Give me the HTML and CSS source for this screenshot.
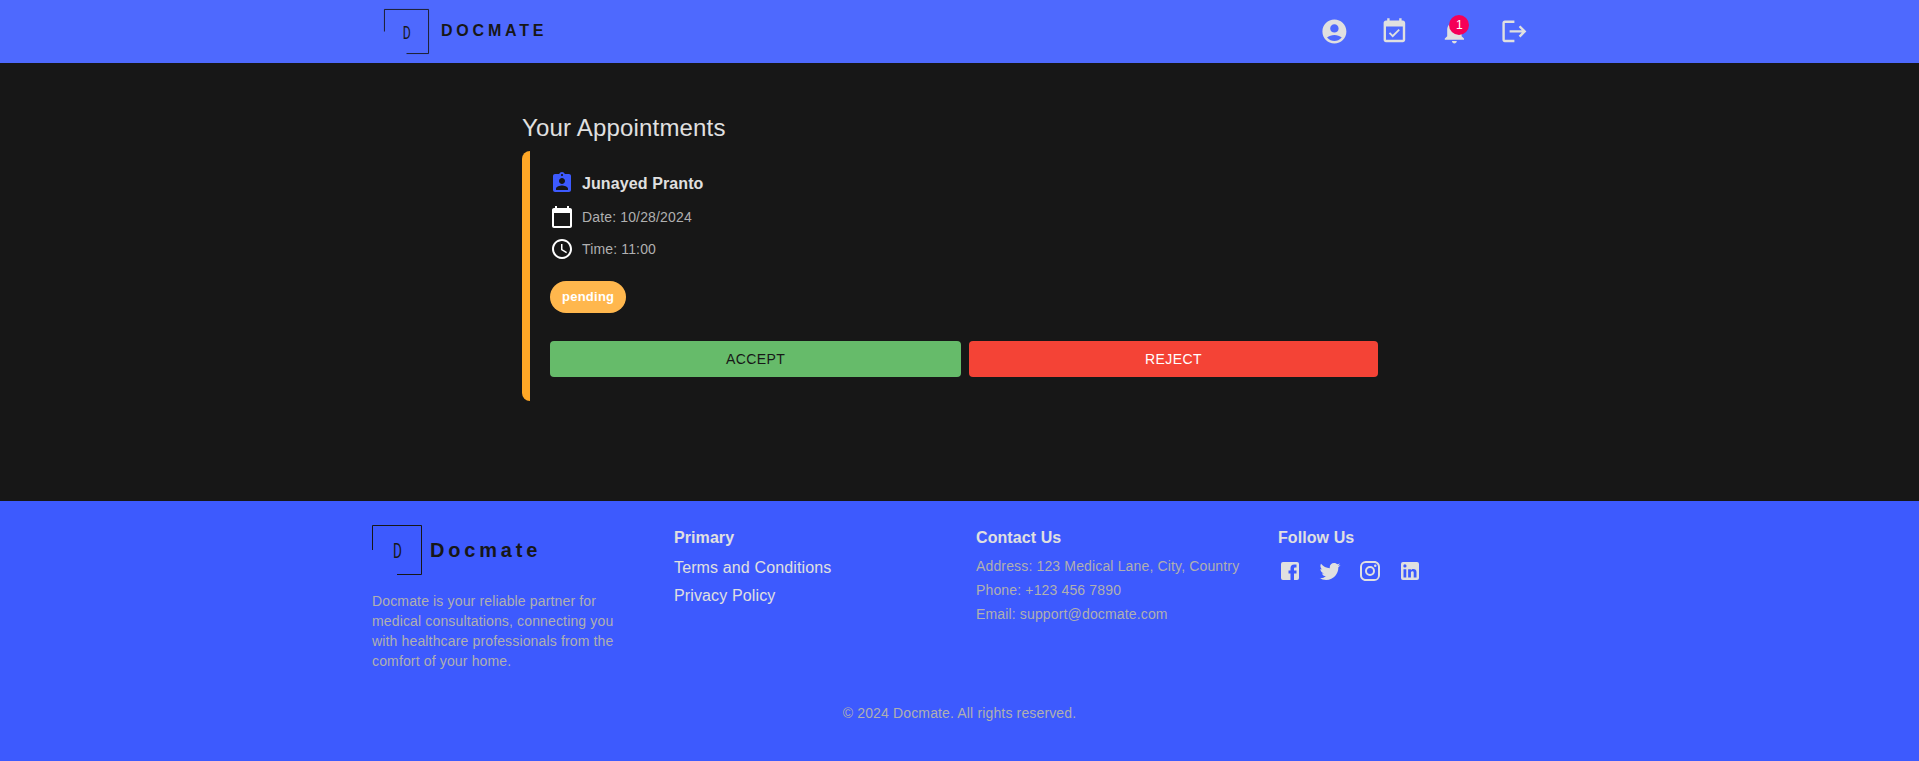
FILE: index.html
```html
<!DOCTYPE html>
<html lang="en">
<head>
<meta charset="utf-8">
<title>Docmate</title>
<link rel="stylesheet" href="styles.css">
</head>
<body>
<header class="header">
  <div class="header-inner">
    <a class="brand">
      <svg class="brand-mark" viewBox="0 0 50 50"><path d="M.5 25V.5h49v49H25"/><text class="mark-letter" transform="translate(20.900 33) scale(.68 1)">D</text></svg>
      <span class="brand-name">DOCMATE</span>
    </a>
    <nav class="nav">
      <svg viewBox="0 0 24 24"><path d="M12 2C6.48 2 2 6.48 2 12s4.48 10 10 10 10-4.48 10-10S17.52 2 12 2m0 4c1.93 0 3.5 1.57 3.5 3.5S13.93 13 12 13s-3.5-1.57-3.5-3.5S10.07 6 12 6m0 14c-2.03 0-4.43-.82-6.14-2.88C7.55 15.8 9.68 15 12 15s4.45.8 6.14 2.12C16.43 19.18 14.03 20 12 20"/></svg>
      <svg viewBox="0 0 24 24"><path d="M16.53 11.06 15.47 10l-4.88 4.88-2.12-2.12-1.06 1.06L10.59 17zM19 3h-1V1h-2v2H8V1H6v2H5c-1.11 0-1.99.9-1.99 2L3 19c0 1.1.89 2 2 2h14c1.1 0 2-.9 2-2V5c0-1.1-.9-2-2-2m0 16H5V8h14z"/></svg>
      <span class="alerts">
        <svg viewBox="0 0 24 24"><path d="M12 22c1.1 0 2-.9 2-2h-4c0 1.1.89 2 2 2m6-6v-5c0-3.07-1.64-5.64-4.5-6.32V4c0-.83-.67-1.5-1.5-1.5s-1.5.67-1.5 1.5v.68C7.63 5.36 6 7.92 6 11v5l-2 2v1h16v-1z"/></svg>
        <span class="badge">1</span>
      </span>
      <svg viewBox="0 0 24 24"><path d="m17 7-1.41 1.41L18.17 11H8v2h10.17l-2.58 2.58L17 17l5-5zM4 5h8V3H4c-1.1 0-2 .9-2 2v14c0 1.1.9 2 2 2h8v-2H4z"/></svg>
    </nav>
  </div>
</header>
<main class="main">
  <h1 class="title">Your Appointments</h1>
  <article class="card">
    <div class="row row-name">
      <svg class="blue" viewBox="0 0 24 24"><path d="M19 3h-4.18C14.4 1.84 13.3 1 12 1s-2.4.84-2.82 2H5c-1.1 0-2 .9-2 2v14c0 1.1.9 2 2 2h14c1.1 0 2-.9 2-2V5c0-1.1-.9-2-2-2m-7 0c.55 0 1 .45 1 1s-.45 1-1 1-1-.45-1-1 .45-1 1-1m0 4c1.66 0 3 1.34 3 3s-1.34 3-3 3-3-1.34-3-3 1.34-3 3-3m6 12H6v-1.4c0-2 4-3.1 6-3.1s6 1.1 6 3.1z"/></svg>
      <span class="name">Junayed Pranto</span>
    </div>
    <div class="row row-date">
      <svg viewBox="0 0 24 24"><path d="M20 3h-1V1h-2v2H7V1H5v2H4c-1.1 0-2 .9-2 2v16c0 1.1.9 2 2 2h16c1.1 0 2-.9 2-2V5c0-1.1-.9-2-2-2m0 18H4V8h16z"/></svg>
      <span>Date: 10/28/2024</span>
    </div>
    <div class="row">
      <svg viewBox="0 0 24 24"><path d="M11.99 2C6.47 2 2 6.48 2 12s4.47 10 9.99 10C17.52 22 22 17.52 22 12S17.52 2 11.99 2M12 20c-4.42 0-8-3.58-8-8s3.58-8 8-8 8 3.58 8 8-3.58 8-8 8m.5-13H11v6l5.25 3.15.75-1.23-4.5-2.67z"/></svg>
      <span>Time: 11:00</span>
    </div>
    <span class="chip">pending</span>
    <div class="actions">
      <button class="btn accept">ACCEPT</button>
      <button class="btn reject">REJECT</button>
    </div>
  </article>
</main>
<footer class="footer">
  <div class="columns">
    <section class="about">
      <div class="brand footer-brand">
        <svg class="brand-mark" viewBox="0 0 50 50"><path d="M.5 25V.5h49v49H25"/><text class="mark-letter" transform="translate(20.900 33) scale(.68 1)">D</text></svg>
        <span class="brand-name">Docmate</span>
      </div>
      <p class="blurb">Docmate is your reliable partner for medical consultations, connecting you with healthcare professionals from the comfort of your home.</p>
    </section>
    <section>
      <h2 class="heading">Primary</h2>
      <a class="link">Terms and Conditions</a>
      <a class="link">Privacy Policy</a>
    </section>
    <section>
      <h2 class="heading">Contact Us</h2>
      <p class="contact">Address: 123 Medical Lane, City, Country</p>
      <p class="contact">Phone: +123 456 7890</p>
      <p class="contact">Email: support@docmate.com</p>
    </section>
    <section>
      <h2 class="heading">Follow Us</h2>
      <div class="social">
        <svg viewBox="0 0 24 24"><path d="M5 3h14a2 2 0 0 1 2 2v14a2 2 0 0 1-2 2h-3v-6.500h2.500V11.500H16V9.800c0-.8.4-1.300 1.300-1.300h1.200V5.500h-2.300C13.800 5.500 12.500 7 12.500 9.400v2.100h-2v3h2V21H5a2 2 0 0 1-2-2V5a2 2 0 0 1 2-2"/></svg>
        <svg viewBox="0 0 24 24"><path d="M22.460 6c-.770.350-1.600.580-2.460.690.880-.530 1.560-1.370 1.880-2.380-.830.500-1.750.850-2.720 1.050C18.370 4.500 17.260 4 16 4c-2.350 0-4.270 1.920-4.270 4.290 0 .340.040.670.110.980C8.280 9.090 5.110 7.380 3 4.790c-.370.630-.580 1.370-.580 2.150 0 1.490.750 2.810 1.910 3.560-.710 0-1.370-.200-1.950-.500v.030c0 2.080 1.480 3.820 3.440 4.210a4.220 4.220 0 0 1-1.930.070 4.280 4.280 0 0 0 4 2.980 8.521 8.521 0 0 1-5.330 1.840q-.510 0-1.020-.060C3.440 20.290 5.700 21 8.120 21 16 21 20.330 14.460 20.330 8.790c0-.190 0-.370-.010-.560.840-.600 1.560-1.360 2.140-2.230"/></svg>
        <svg viewBox="0 0 24 24"><path d="M7.800 2h8.400C19.400 2 22 4.600 22 7.800v8.400a5.800 5.800 0 0 1-5.800 5.800H7.800C4.600 22 2 19.400 2 16.200V7.800A5.800 5.800 0 0 1 7.800 2m-.2 2A3.600 3.600 0 0 0 4 7.600v8.800C4 18.390 5.610 20 7.600 20h8.800a3.600 3.600 0 0 0 3.600-3.600V7.600C20 5.610 18.390 4 16.400 4zm9.650 1.500a1.250 1.250 0 1 1 0 2.500 1.250 1.250 0 0 1 0-2.500M12 7a5 5 0 1 1 0 10 5 5 0 0 1 0-10m0 2a3 3 0 1 0 0 6 3 3 0 0 0 0-6"/></svg>
        <svg viewBox="0 0 24 24"><path d="M19 3a2 2 0 0 1 2 2v14a2 2 0 0 1-2 2H5a2 2 0 0 1-2-2V5a2 2 0 0 1 2-2zm-.5 15.500v-5.300a3.260 3.260 0 0 0-3.260-3.260c-.850 0-1.840.520-2.320 1.300v-1.110h-2.790v8.370h2.790v-4.930c0-.770.620-1.400 1.390-1.400a1.400 1.400 0 0 1 1.400 1.400v4.930zM6.880 8.560a1.680 1.680 0 0 0 0-3.370 1.690 1.690 0 0 0 0 3.370m1.390 9.940v-8.370H5.500v8.370z"/></svg>
      </div>
    </section>
  </div>
  <p class="copyright">© 2024 Docmate. All rights reserved.</p>
</footer>
</body>
</html>
```
FILE: styles.css
```css
* { box-sizing: border-box; }
body {
  margin: 0;
  height: 761px;
  display: flex;
  flex-direction: column;
  overflow: hidden;
  background: #171717;
  color: #e0e0e0;
  font-family: "Liberation Sans", Arial, sans-serif;
}
h1, h2, p { margin: 0; }
svg { flex: none; fill: currentColor; }

.header { height: 63px; background: #4e69fe; }
.header-inner {
  width: 1151px;
  height: 63px;
  margin: 0 auto;
  display: flex;
  align-items: center;
  justify-content: space-between;
  padding-right: 6.6px;
}
.brand { display: flex; align-items: center; gap: 12px; color: #171717; }
.brand-mark { width: 45px; height: 45px; overflow: visible; }
.brand-mark path { fill: none; stroke: #171717; stroke-width: 1; }
.mark-letter { font: 400 20px Roboto, sans-serif; }
.brand-name { font-size: 16px; font-weight: 700; letter-spacing: 3.8px; line-height: 24px; margin-top: -2px; }
.nav { display: flex; align-items: center; gap: 31.2px; }
.nav svg { display: block; width: 28.8px; height: 28.8px; }
.alerts { position: relative; }
.badge {
  position: absolute;
  top: -2px;
  right: -1px;
  width: 20px;
  height: 20px;
  border-radius: 10px;
  background: #f50057;
  color: #fff;
  font-size: 12px;
  line-height: 20px;
  text-align: center;
}

.main { height: 438px; width: 875px; margin: 0 auto; padding-top: 49px; }
.title { font-size: 24px; font-weight: 400; line-height: 32px; letter-spacing: .18px; margin-bottom: 7px; }
.card {
  height: 250px;
  padding: 20px 19px 24px 20px;
  border-left: 8px solid #ffa726;
  border-radius: 8px;
}
.row {
  display: flex;
  align-items: center;
  gap: 8px;
  height: 24px;
  color: #b0b0b0;
  font-size: 14px;
  letter-spacing: .15px;
}
.row svg { width: 24px; height: 24px; color: #fff; }
.row .blue { color: #3d5afe; }
.row-name { margin-bottom: 10px; }
.row-date { margin-bottom: 8px; }
.name { color: #e0e0e0; font-size: 16px; font-weight: 700; margin-top: 1px; letter-spacing: .1px; }
.chip {
  display: inline-block;
  height: 32px;
  margin-top: 20px;
  padding: 0 12px;
  border-radius: 16px;
  background: #ffb74d;
  color: #fff;
  font-size: 13px;
  font-weight: 700;
  line-height: 32px;
  letter-spacing: .25px;
}
.actions { display: grid; grid-template-columns: 411px 409px; gap: 8px; margin-top: 28px; }
.btn {
  height: 36px;
  padding: 0;
  border: 0;
  border-radius: 4px;
  font: 14px/36px "Liberation Sans", Arial, sans-serif;
  letter-spacing: .4px;
}
.accept { background: #66bb6a; color: #171717; }
.reject { background: #f44336; color: #fff; }

.footer { flex: 1; padding-top: 24px; background: #3d5afe; }
.columns { width: 1175px; height: 176px; margin: 0 auto; display: grid; grid-template-columns: repeat(3, 302px) 1fr; }
.footer-brand { gap: 8px; }
.footer-brand .brand-mark { width: 50px; height: 50px; }
.footer-brand .brand-name { font-size: 20px; margin-top: 0; }
.blurb { width: 260px; margin-top: 16px; color: #b0b0b0; font-size: 14px; line-height: 20px; letter-spacing: .15px; }
.heading { font-size: 16px; font-weight: 700; line-height: 24px; letter-spacing: .08px; padding-top: 1px; margin-bottom: 4px; }
.link { display: block; line-height: 28px; letter-spacing: .13px; }
.contact { color: #b0b0b0; font-size: 14px; line-height: 24px; letter-spacing: .15px; }
.social { display: flex; gap: 16px; margin-top: 5px; padding-top: 4px; }
.social svg { width: 24px; height: 24px; }
.copyright { color: #b0b0b0; font-size: 14px; line-height: 24px; letter-spacing: .15px; text-align: center; }
```
